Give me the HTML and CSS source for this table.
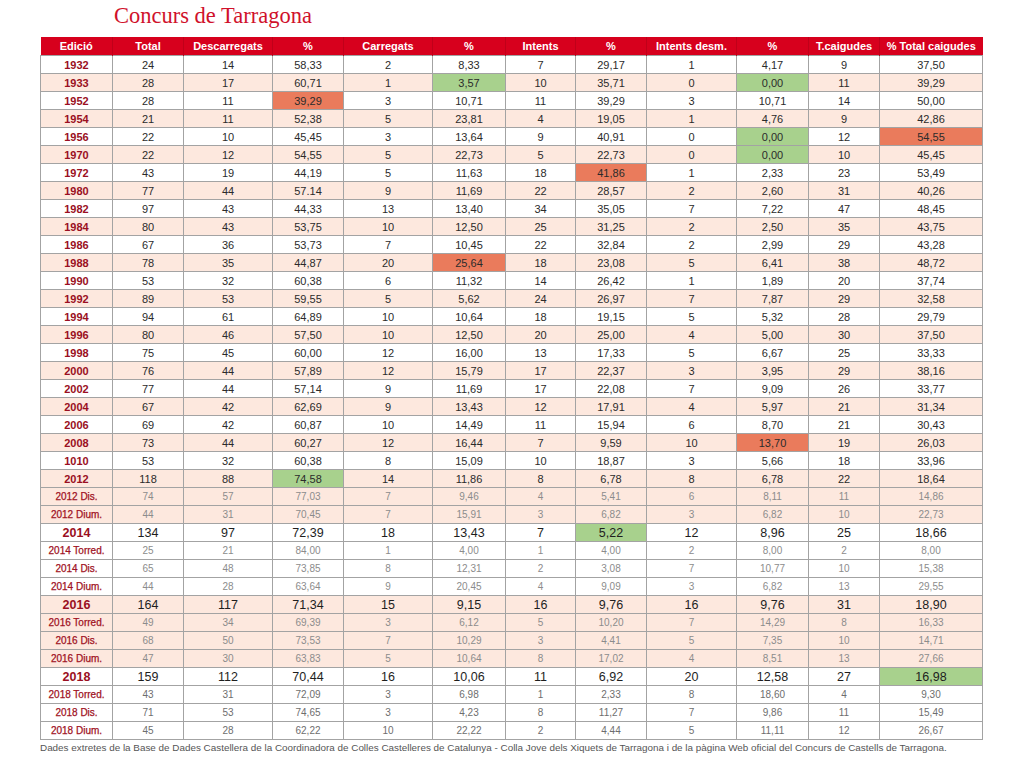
FILE: index.html
```html
<!DOCTYPE html>
<html lang="ca">
<head>
<meta charset="utf-8">
<title>Concurs de Tarragona</title>
<link rel="stylesheet" href="styles.css">
</head>
<body>
<div class="page">
<h1 class="title">Concurs de Tarragona</h1>
<table class="stats">
<colgroup>
<col class="c72"><col class="c71"><col class="c89"><col class="c71"><col class="c89"><col class="c73"><col class="c70"><col class="c71"><col class="c90"><col class="c72"><col class="c71"><col class="c103">
</colgroup>
<thead>
<tr><th>Edició</th><th>Total</th><th>Descarregats</th><th>%</th><th>Carregats</th><th>%</th><th>Intents</th><th>%</th><th>Intents desm.</th><th>%</th><th>T.caigudes</th><th>% Total caigudes</th></tr>
</thead>
<tbody>
<tr><th>1932</th><td>24</td><td>14</td><td>58,33</td><td>2</td><td>8,33</td><td>7</td><td>29,17</td><td>1</td><td>4,17</td><td>9</td><td>37,50</td></tr>
<tr class="p"><th>1933</th><td>28</td><td>17</td><td>60,71</td><td>1</td><td class="g">3,57</td><td>10</td><td>35,71</td><td>0</td><td class="g">0,00</td><td>11</td><td>39,29</td></tr>
<tr><th>1952</th><td>28</td><td>11</td><td class="s">39,29</td><td>3</td><td>10,71</td><td>11</td><td>39,29</td><td>3</td><td>10,71</td><td>14</td><td>50,00</td></tr>
<tr class="p"><th>1954</th><td>21</td><td>11</td><td>52,38</td><td>5</td><td>23,81</td><td>4</td><td>19,05</td><td>1</td><td>4,76</td><td>9</td><td>42,86</td></tr>
<tr><th>1956</th><td>22</td><td>10</td><td>45,45</td><td>3</td><td>13,64</td><td>9</td><td>40,91</td><td>0</td><td class="g">0,00</td><td>12</td><td class="s">54,55</td></tr>
<tr class="p"><th>1970</th><td>22</td><td>12</td><td>54,55</td><td>5</td><td>22,73</td><td>5</td><td>22,73</td><td>0</td><td class="g">0,00</td><td>10</td><td>45,45</td></tr>
<tr><th>1972</th><td>43</td><td>19</td><td>44,19</td><td>5</td><td>11,63</td><td>18</td><td class="s">41,86</td><td>1</td><td>2,33</td><td>23</td><td>53,49</td></tr>
<tr class="p"><th>1980</th><td>77</td><td>44</td><td>57.14</td><td>9</td><td>11,69</td><td>22</td><td>28,57</td><td>2</td><td>2,60</td><td>31</td><td>40,26</td></tr>
<tr><th>1982</th><td>97</td><td>43</td><td>44,33</td><td>13</td><td>13,40</td><td>34</td><td>35,05</td><td>7</td><td>7,22</td><td>47</td><td>48,45</td></tr>
<tr class="p"><th>1984</th><td>80</td><td>43</td><td>53,75</td><td>10</td><td>12,50</td><td>25</td><td>31,25</td><td>2</td><td>2,50</td><td>35</td><td>43,75</td></tr>
<tr><th>1986</th><td>67</td><td>36</td><td>53,73</td><td>7</td><td>10,45</td><td>22</td><td>32,84</td><td>2</td><td>2,99</td><td>29</td><td>43,28</td></tr>
<tr class="p"><th>1988</th><td>78</td><td>35</td><td>44,87</td><td>20</td><td class="s">25,64</td><td>18</td><td>23,08</td><td>5</td><td>6,41</td><td>38</td><td>48,72</td></tr>
<tr><th>1990</th><td>53</td><td>32</td><td>60,38</td><td>6</td><td>11,32</td><td>14</td><td>26,42</td><td>1</td><td>1,89</td><td>20</td><td>37,74</td></tr>
<tr class="p"><th>1992</th><td>89</td><td>53</td><td>59,55</td><td>5</td><td>5,62</td><td>24</td><td>26,97</td><td>7</td><td>7,87</td><td>29</td><td>32,58</td></tr>
<tr><th>1994</th><td>94</td><td>61</td><td>64,89</td><td>10</td><td>10,64</td><td>18</td><td>19,15</td><td>5</td><td>5,32</td><td>28</td><td>29,79</td></tr>
<tr class="p"><th>1996</th><td>80</td><td>46</td><td>57,50</td><td>10</td><td>12,50</td><td>20</td><td>25,00</td><td>4</td><td>5,00</td><td>30</td><td>37,50</td></tr>
<tr><th>1998</th><td>75</td><td>45</td><td>60,00</td><td>12</td><td>16,00</td><td>13</td><td>17,33</td><td>5</td><td>6,67</td><td>25</td><td>33,33</td></tr>
<tr class="p"><th>2000</th><td>76</td><td>44</td><td>57,89</td><td>12</td><td>15,79</td><td>17</td><td>22,37</td><td>3</td><td>3,95</td><td>29</td><td>38,16</td></tr>
<tr><th>2002</th><td>77</td><td>44</td><td>57,14</td><td>9</td><td>11,69</td><td>17</td><td>22,08</td><td>7</td><td>9,09</td><td>26</td><td>33,77</td></tr>
<tr class="p"><th>2004</th><td>67</td><td>42</td><td>62,69</td><td>9</td><td>13,43</td><td>12</td><td>17,91</td><td>4</td><td>5,97</td><td>21</td><td>31,34</td></tr>
<tr><th>2006</th><td>69</td><td>42</td><td>60,87</td><td>10</td><td>14,49</td><td>11</td><td>15,94</td><td>6</td><td>8,70</td><td>21</td><td>30,43</td></tr>
<tr class="p"><th>2008</th><td>73</td><td>44</td><td>60,27</td><td>12</td><td>16,44</td><td>7</td><td>9,59</td><td>10</td><td class="s">13,70</td><td>19</td><td>26,03</td></tr>
<tr><th>1010</th><td>53</td><td>32</td><td>60,38</td><td>8</td><td>15,09</td><td>10</td><td>18,87</td><td>3</td><td>5,66</td><td>18</td><td>33,96</td></tr>
<tr class="p"><th>2012</th><td>118</td><td>88</td><td class="g">74,58</td><td>14</td><td>11,86</td><td>8</td><td>6,78</td><td>8</td><td>6,78</td><td>22</td><td>18,64</td></tr>
<tr class="p sub"><th>2012 Dis.</th><td>74</td><td>57</td><td>77,03</td><td>7</td><td>9,46</td><td>4</td><td>5,41</td><td>6</td><td>8,11</td><td>11</td><td>14,86</td></tr>
<tr class="p sub"><th>2012 Dium.</th><td>44</td><td>31</td><td>70,45</td><td>7</td><td>15,91</td><td>3</td><td>6,82</td><td>3</td><td>6,82</td><td>10</td><td>22,73</td></tr>
<tr class="big"><th>2014</th><td>134</td><td>97</td><td>72,39</td><td>18</td><td>13,43</td><td>7</td><td class="g">5,22</td><td>12</td><td>8,96</td><td>25</td><td>18,66</td></tr>
<tr class="sub"><th>2014 Torred.</th><td>25</td><td>21</td><td>84,00</td><td>1</td><td>4,00</td><td>1</td><td>4,00</td><td>2</td><td>8,00</td><td>2</td><td>8,00</td></tr>
<tr class="sub"><th>2014 Dis.</th><td>65</td><td>48</td><td>73,85</td><td>8</td><td>12,31</td><td>2</td><td>3,08</td><td>7</td><td>10,77</td><td>10</td><td>15,38</td></tr>
<tr class="sub"><th>2014 Dium.</th><td>44</td><td>28</td><td>63,64</td><td>9</td><td>20,45</td><td>4</td><td>9,09</td><td>3</td><td>6,82</td><td>13</td><td>29,55</td></tr>
<tr class="p big"><th>2016</th><td>164</td><td>117</td><td>71,34</td><td>15</td><td>9,15</td><td>16</td><td>9,76</td><td>16</td><td>9,76</td><td>31</td><td>18,90</td></tr>
<tr class="p sub"><th>2016 Torred.</th><td>49</td><td>34</td><td>69,39</td><td>3</td><td>6,12</td><td>5</td><td>10,20</td><td>7</td><td>14,29</td><td>8</td><td>16,33</td></tr>
<tr class="p sub"><th>2016 Dis.</th><td>68</td><td>50</td><td>73,53</td><td>7</td><td>10,29</td><td>3</td><td>4,41</td><td>5</td><td>7,35</td><td>10</td><td>14,71</td></tr>
<tr class="p sub"><th>2016 Dium.</th><td>47</td><td>30</td><td>63,83</td><td>5</td><td>10,64</td><td>8</td><td>17,02</td><td>4</td><td>8,51</td><td>13</td><td>27,66</td></tr>
<tr class="big"><th>2018</th><td>159</td><td>112</td><td>70,44</td><td>16</td><td>10,06</td><td>11</td><td>6,92</td><td>20</td><td>12,58</td><td>27</td><td class="g">16,98</td></tr>
<tr class="sub sub-dark"><th>2018 Torred.</th><td>43</td><td>31</td><td>72,09</td><td>3</td><td>6,98</td><td>1</td><td>2,33</td><td>8</td><td>18,60</td><td>4</td><td>9,30</td></tr>
<tr class="sub sub-dark"><th>2018 Dis.</th><td>71</td><td>53</td><td>74,65</td><td>3</td><td>4,23</td><td>8</td><td>11,27</td><td>7</td><td>9,86</td><td>11</td><td>15,49</td></tr>
<tr class="sub sub-dark"><th>2018 Dium.</th><td>45</td><td>28</td><td>62,22</td><td>10</td><td>22,22</td><td>2</td><td>4,44</td><td>5</td><td>11,11</td><td>12</td><td>26,67</td></tr>
</tbody>
</table>
<p class="note">Dades extretes de la Base de Dades Castellera de la Coordinadora de Colles Castelleres de Catalunya - Colla Jove dels Xiquets de Tarragona i de la pàgina Web oficial del Concurs de Castells de Tarragona.</p>
</div>
</body>
</html>
```

FILE: styles.css
```css
html, body {
  margin: 0;
  padding: 0;
  background: #ffffff;
}

.page {
  padding: 0 0 0 40px;
  font-family: "Liberation Sans", Arial, sans-serif;
}

.title {
  margin: 0;
  padding: 4px 0 0 74px;
  height: 33px;
  box-sizing: border-box;
  font-family: "Liberation Serif", "Times New Roman", serif;
  font-weight: normal;
  font-size: 22.5px;
  line-height: 24px;
  color: #d0112b;
}

.stats {
  border-collapse: collapse;
  table-layout: fixed;
  width: 943px;
  font-size: 11px;
  color: #2b2b2b;
}

.c72 { width: 72px; }
.c71 { width: 71px; }
.c89 { width: 89px; }
.c73 { width: 73px; }
.c70 { width: 70px; }
.c90 { width: 90px; }
.c103 { width: 103px; }

.stats thead th {
  background: #d7001d;
  color: #ffffff;
  font-weight: bold;
  font-size: 11px;
  height: 18px;
  padding: 0;
  border-right: 1px solid #c00019;
  border-top: 4px solid #ffffff;
  line-height: 17px;
  text-align: center;
}

.stats thead th:last-child {
  border-right: none;
}

.stats tbody th,
.stats tbody td {
  height: 17px;
  padding: 0;
  border: 1px solid #a3a3a3;
  text-align: center;
  vertical-align: middle;
  line-height: 16px;
}

.stats tbody th {
  color: #9a0f22;
  font-weight: bold;
  font-size: 11px;
}

.stats tbody tr.p th,
.stats tbody tr.p td {
  background: #fde8de;
}

.stats tbody td.g,
.stats tbody tr.p td.g {
  background: #a8d18d;
}

.stats tbody td.s,
.stats tbody tr.p td.s {
  background: #ea7b5c;
}

.stats tbody tr.big td {
  font-size: 12.5px;
  color: #1e1e1e;
}

.stats tbody tr.big th {
  font-size: 12.5px;
}

.stats tbody tr.sub td {
  font-size: 10px;
  color: #8c8c8c;
}

.stats tbody tr.sub th {
  font-size: 10px;
  font-weight: normal;
  color: #a01224;
  -webkit-text-stroke: 0.25px #a01224;
}

.stats tbody tr.sub-dark td {
  color: #6e6e6e;
}

.note {
  margin: 2px 0 0 0;
  font-size: 9.9px;
  color: #555555;
  white-space: nowrap;
}
```
